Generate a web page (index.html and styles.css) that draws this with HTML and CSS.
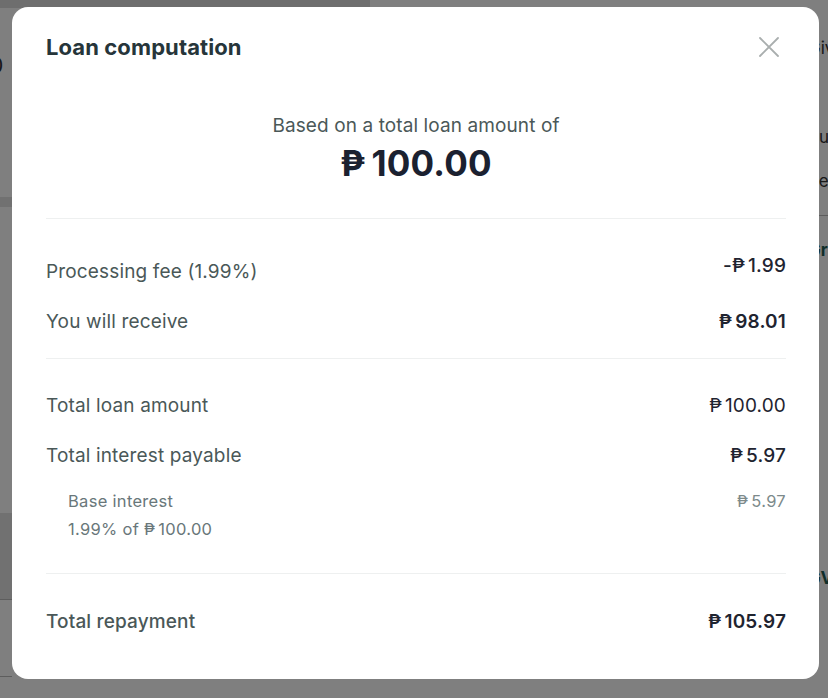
FILE: index.html
```html
<!DOCTYPE html>
<html lang="en">

<head>
    <meta charset="UTF-8">
    <meta name="viewport" content="width=device-width, initial-scale=1.0">
    <title>Loan computation</title>
    <link rel="stylesheet" href="styles.css">
</head>

<body>
    <!-- page behind the dialog -->
    <div class="page">
        <div class="topbar"></div>
        <div class="cols">
            <div class="left-col">
                <div class="big-num">₱100</div>
                <div class="band band-a"></div>
                <div class="band band-b"></div>
                <div class="left-line"></div>
                <div class="left-txt">Pay with</div>
                <div class="left-line"></div>
            </div>
            <div class="right-col">
                <div class="r-txt r1">Give</div>
                <div class="r-txt r2">Bu</div>
                <div class="r-txt r3">Rep</div>
                <div class="r-line"></div>
                <div class="r-txt green r4">Gr</div>
                <div class="r-txt green r5">GV</div>
            </div>
        </div>
    </div>

    <div class="overlay">
        <div class="modal">
            <div class="head">
                <h2 class="title">Loan computation</h2>
                <button class="close" aria-label="Close">
                    <svg width="24" height="24" viewBox="0 0 24 24">
                        <path d="M3 3 L21 21 M21 3 L3 21" stroke="#a9aeae" stroke-width="1.8" fill="none" stroke-linecap="round"/>
                    </svg>
                </button>
            </div>
            <div class="summary">
                <div class="based">Based on a total loan amount of</div>
                <div class="amount"><span class="peso">₱</span>100.00</div>
            </div>
            <div class="section sec-1">
                <div class="row row-fee">
                    <span class="lbl fee-lbl">Processing fee (1.99%)</span>
                    <span class="val">-<span class="peso">₱</span>1.99</span>
                </div>
                <div class="row">
                    <span class="lbl">You will receive</span>
                    <span class="val strong"><span class="peso">₱</span>98.01</span>
                </div>
            </div>
            <div class="section sec-2">
                <div class="row">
                    <span class="lbl">Total loan amount</span>
                    <span class="val light"><span class="peso">₱</span>100.00</span>
                </div>
                <div class="row">
                    <span class="lbl">Total interest payable</span>
                    <span class="val"><span class="peso">₱</span>5.97</span>
                </div>
                <div class="sub">
                    <div class="sub-lbl">
                        <div>Base interest</div>
                        <div>1.99% of <span class="peso">₱</span>100.00</div>
                    </div>
                    <span class="sub-val"><span class="peso">₱</span>5.97</span>
                </div>
            </div>
            <div class="section sec-3">
                <div class="row">
                    <span class="lbl strong-lbl">Total repayment</span>
                    <span class="val strong"><span class="peso">₱</span>105.97</span>
                </div>
            </div>
        </div>
    </div>
</body>

</html>
```

FILE: styles.css
```css
*{
    box-sizing: border-box;
}
body{
    margin: 0;
    font-family: Inter, "Noto Sans", sans-serif;
    background: #fff;
    overflow: hidden;
}

/* background page */
.page{
    width: 828px;
    height: 698px;
    overflow: hidden;
}
.topbar{
    width: 370px;
    height: 8px;
    background: #dcdcdc;
}
.cols{
    display: flex;
    justify-content: space-between;
}
.left-col{
    width: 60px;
    margin-left: -48px;
}
.big-num{
    margin-top: 44px;
    font-size: 22px;
    color: #333;
}
.band{
    background: #e2e2e2;
}
.band-a{
    margin-top: 119px;
    height: 10px;
}
.band-b{
    margin-top: 306px;
    height: 86px;
}
.left-line{
    height: 1px;
    background: #bbb;
}
.left-txt{
    padding: 11px 0 21px;
    font-size: 18px;
    line-height: 22px;
    color: #222;
}
.right-col{
    width: 60px;
    margin-right: -40px;
}
.r-txt{
    font-size: 17px;
    line-height: 20px;
    color: #333;
}
.r1{
    margin-top: 30px;
}
.r2{
    margin-top: 69px;
}
.r3{
    margin-top: 24px;
}
.r-line{
    margin-top: 24px;
    height: 1px;
    background: #bbb;
}
.green{
    color: #1f5c55;
    font-weight: 700;
}
.r4{
    margin-top: 24px;
}
.r5{
    margin-top: 308px;
}

/* dialog */
.overlay{
    position: fixed;
    inset: 0;
    background: rgba(0, 0, 0, 0.5);
    padding: 7px 9px 0 12px;
}
.modal{
    width: 807px;
    height: 672px;
    background: #fff;
    border-radius: 16px;
    padding: 0 33px 0 34px;
}
.head{
    display: flex;
    justify-content: space-between;
    align-items: flex-start;
    padding-top: 26px;
    height: 80px;
}
.title{
    margin: 0;
    font-size: 22px;
    line-height: 28px;
    font-weight: 700;
    color: #26353a;
    letter-spacing: 0.1px;
}
.close{
    border: none;
    background: none;
    padding: 0;
    margin: 2px 5px 0 0;
    width: 24px;
    height: 24px;
    cursor: pointer;
}
.peso{
    margin-right: 3px;
}
.summary{
    text-align: center;
    padding-top: 27px;
    height: 131px;
}
.based{
    font-size: 19px;
    line-height: 24px;
    color: #4b5858;
    letter-spacing: 0.1px;
}
.amount{
    margin-top: 5px;
    font-size: 35px;
    line-height: 40px;
    font-weight: 700;
    color: #1b2130;
    letter-spacing: 0.2px;
}
.amount .peso{
    margin-right: 6px;
}
.section{
    border-top: 1px solid #eef0f0;
    display: flex;
    flex-direction: column;
    gap: 26px;
}
.sec-1{
    padding: 35px 0 24px;
}
.sec-2{
    padding: 35px 0 33px;
}
.sec-3{
    padding-top: 36px;
}
.row{
    display: flex;
    justify-content: space-between;
    align-items: flex-start;
    font-size: 19px;
    line-height: 24px;
    letter-spacing: 0.15px;
}
.fee-lbl{
    padding-top: 6px;
}
.lbl{
    color: #4a5858;
}
.strong-lbl{
    font-weight: 500;
}
.val{
    color: #1f2430;
    font-weight: 500;
}
.light{
    font-weight: 400;
}
.strong{
    font-weight: 600;
}
.sub{
    display: flex;
    justify-content: space-between;
    align-items: flex-start;
    margin-top: -4px;
    padding-left: 22px;
    font-size: 16.5px;
    line-height: 22px;
    letter-spacing: 0.3px;
}
.sub-lbl{
    color: #69777a;
    display: flex;
    flex-direction: column;
    gap: 6px;
}
.sub-val{
    color: #7d8a8b;
}
```
